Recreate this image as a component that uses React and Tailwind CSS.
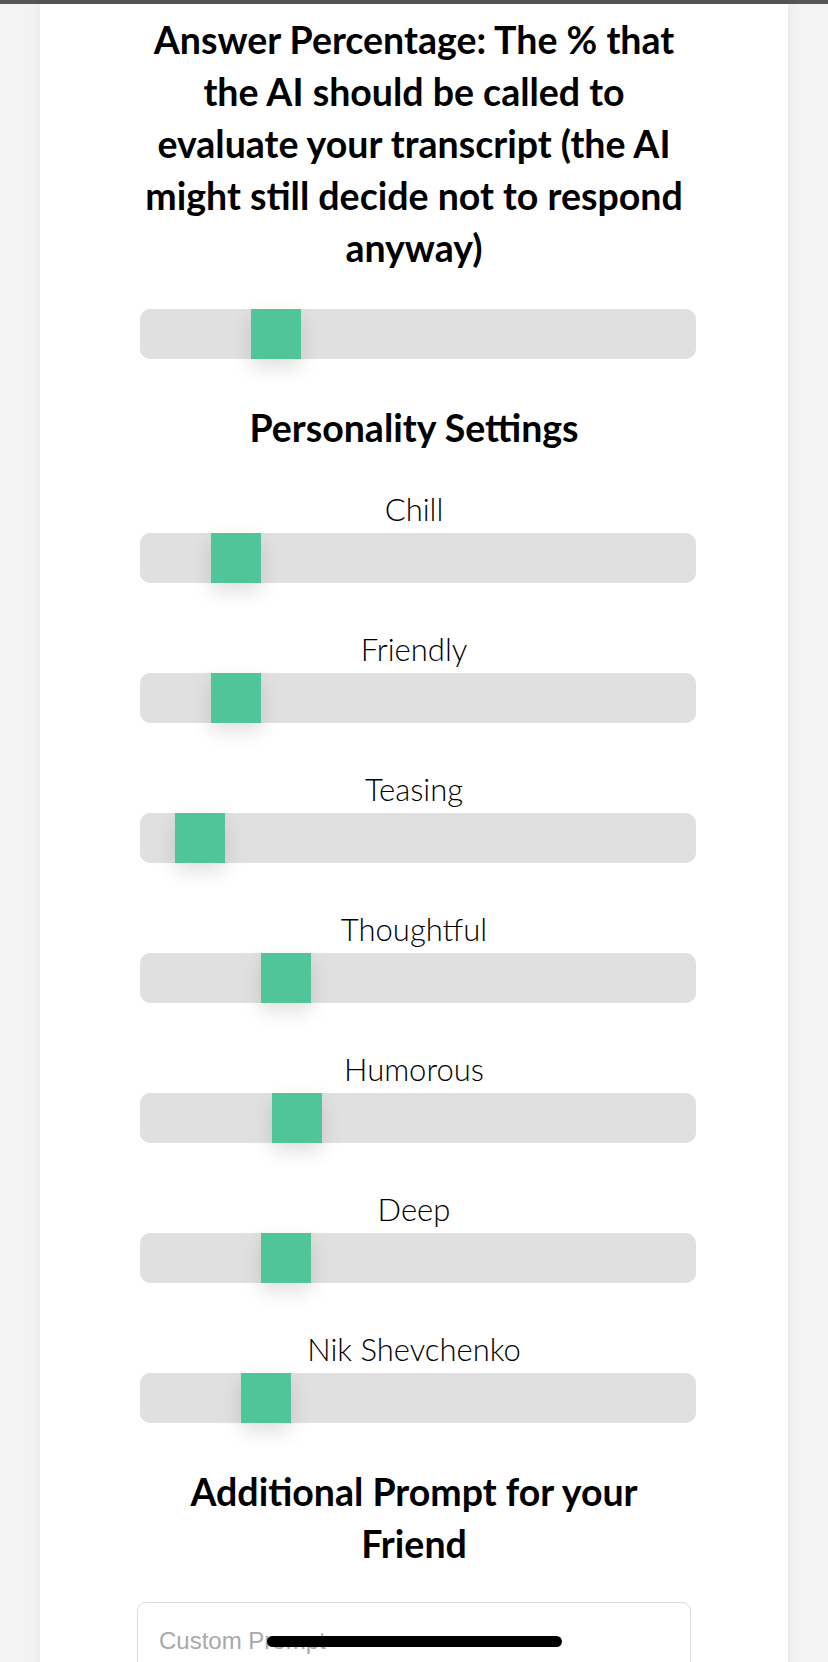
import React from "react";

const traits = [
  { name: "Chill", value: 14 },
  { name: "Friendly", value: 14 },
  { name: "Teasing", value: 7 },
  { name: "Thoughtful", value: 24 },
  { name: "Humorous", value: 26 },
  { name: "Deep", value: 24 },
  { name: "Nik Shevchenko", value: 20 },
];

// track is 556 wide, thumb 50 -> 506 px of travel
function Slider({ value }) {
  const left = (value / 100) * 506;
  return (
    <div className="relative ml-[100px] h-[50px] w-[556px] rounded-[10px] bg-[#e0e0e0]">
      <div
        className="absolute top-0 h-[50px] w-[50px] bg-[#51c59a] shadow-[0_8px_20px_rgba(0,0,0,0.13)]"
        style={{ left }}
      />
    </div>
  );
}

export default function App() {
  return (
    <div
      className="relative h-[1662px] overflow-hidden bg-[#f3f3f3]"
      style={{ fontFamily: "Lato, 'Liberation Sans', sans-serif" }}
    >
      <div className="h-[4px] bg-[#555555]" />

      <div className="mx-[40px] h-[1700px] bg-white pt-[10px] text-black shadow-[0_0_12px_rgba(0,0,0,0.07)]">
        <h1 className="mx-auto w-[660px] text-center text-[37.5px] font-bold leading-[52px]">
          Answer Percentage: The % that
          <br />
          the AI should be called to
          <br />
          evaluate your transcript (the AI
          <br />
          might still decide not to respond
          <br />
          anyway)
        </h1>

        <div className="mt-[35px]">
          <Slider value={22} />
        </div>

        <h2 className="mt-[43px] text-center text-[37.5px] font-bold leading-[52px]">
          Personality Settings
        </h2>

        <div className="mt-[35px]">
          {traits.map((t, i) => (
            <div key={t.name} className={i > 0 ? "mt-[46px]" : ""}>
              <div className="text-center text-[31px] font-light leading-[40px]">
                {t.name}
              </div>
              <div className="mt-[4px]">
                <Slider value={t.value} />
              </div>
            </div>
          ))}
        </div>

        <h2 className="mx-auto mt-[43px] w-[660px] text-center text-[37.5px] font-bold leading-[52px]">
          Additional Prompt for your
          <br />
          Friend
        </h2>

        <div className="ml-[97px] mt-[32px] h-[160px] w-[554px] rounded-[9px] border border-[#dcdcdc] px-[21px] pt-[20px]">
          <span
            className="text-[24px] text-[#a9a9a9]"
            style={{ fontFamily: "'Liberation Sans', Arial, sans-serif" }}
          >
            Custom Prompt
          </span>
        </div>
      </div>

      <div className="absolute bottom-[15px] left-[267px] h-[11px] w-[295px] rounded-full bg-black" />
    </div>
  );
}
